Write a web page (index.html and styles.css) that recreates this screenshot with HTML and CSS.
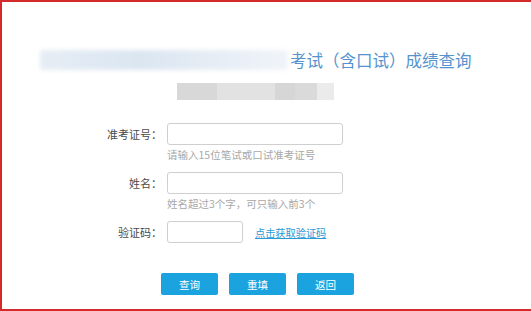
FILE: index.html
```html
<!DOCTYPE html>
<html lang="zh-CN">
<head>
  <meta charset="UTF-8">
  <title>成绩查询</title>
  <link rel="stylesheet" href="styles.css">
</head>
<body>
  <div class="page">
    <div class="title">
      <div class="blur-name"></div>
      <span>考试（含口试）成绩查询</span>
    </div>
    <div class="sub-blur">
      <i class="b1"></i><i class="b2"></i><i class="b3"></i><i class="b4"></i><i class="b5"></i>
    </div>

    <form class="query-form">
      <label class="lbl">准考证号：</label>
      <div class="field">
        <input type="text" class="ipt">
        <p class="hint">请输入15位笔试或口试准考证号</p>
      </div>

      <label class="lbl">姓名：</label>
      <div class="field">
        <input type="text" class="ipt">
        <p class="hint">姓名超过3个字，可只输入前3个</p>
      </div>

      <label class="lbl">验证码：</label>
      <div class="field captcha">
        <input type="text" class="ipt small">
        <a href="#" class="get-code">点击获取验证码</a>
      </div>
    </form>

    <div class="buttons">
      <button type="button">查询</button>
      <button type="button">重填</button>
      <button type="button">返回</button>
    </div>
  </div>
</body>
</html>
```

FILE: styles.css
```css
body {
  margin: 0;
  background: #fff;
  font-family: "Noto Sans CJK SC", "Noto Sans", sans-serif;
}
.page {
  box-sizing: border-box;
  height: 311px;
  border: 2px solid #d42a2a;
  border-right: none;
  overflow: hidden;
}
.title {
  display: flex;
  align-items: center;
  margin-top: 47px;
  padding-left: 38px;
  height: 22px;
}
.blur-name {
  width: 248px;
  height: 20px;
  background: linear-gradient(90deg, #e6edf5 0%, #dbe6f1 40%, #e6edf5 70%, #f0f4f9 100%);
  filter: blur(2px);
}
.title span {
  font-size: 16.5px;
  line-height: 22px;
  color: #5593cf;
  margin-left: 2px;
}
.sub-blur {
  display: flex;
  margin: 12px 0 0 175px;
  width: 157px;
  height: 17px;
}
.sub-blur i {
  display: block;
  height: 100%;
}
.sub-blur .b1 { width: 40px; background: #d8d8d8; }
.sub-blur .b2 { width: 58px; background: #e2e2e2; }
.sub-blur .b3 { width: 20px; background: #d6d6d6; }
.sub-blur .b4 { width: 22px; background: #dadada; }
.sub-blur .b5 { width: 17px; background: #ebebeb; }

.query-form {
  display: grid;
  grid-template-columns: 160px auto;
  column-gap: 5px;
  margin: 23px 0 0;
}
.lbl {
  text-align: right;
  font-size: 11px;
  line-height: 22px;
  color: #4a4a4a;
}
.field {
  margin-bottom: 10px;
}
.ipt {
  display: block;
  box-sizing: border-box;
  width: 176px;
  height: 22px;
  margin: 0;
  border: 1px solid #cfcfcf;
  border-radius: 3px;
  outline: none;
}
.ipt.small {
  width: 76px;
}
.hint {
  margin: 3px 0 0;
  font-size: 10.5px;
  line-height: 14px;
  color: #a8a8a8;
}
.captcha {
  display: flex;
  align-items: center;
  gap: 12px;
}
.get-code {
  font-size: 10.2px;
  color: #2a9ad8;
}
.buttons {
  display: flex;
  gap: 11px;
  margin: 20px 0 0 159px;
}
.buttons button {
  width: 57px;
  height: 22px;
  border: none;
  border-radius: 2px;
  background: #1aa3df;
  color: #fff;
  font-family: inherit;
  font-size: 10.5px;
  padding: 0;
}
```
